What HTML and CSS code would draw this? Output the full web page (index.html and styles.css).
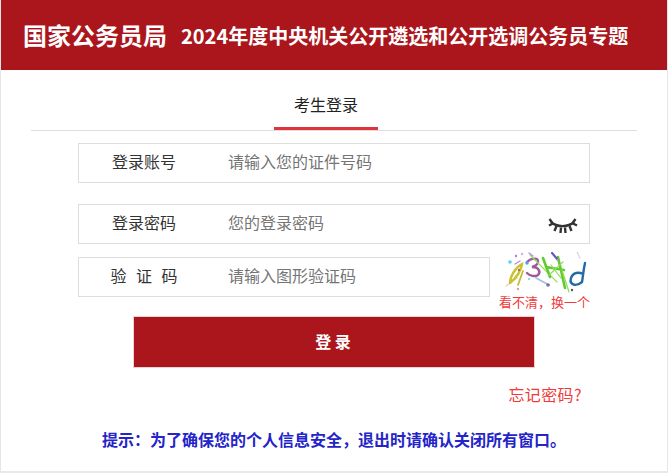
FILE: index.html
```html
<!DOCTYPE html>
<html lang="zh-CN">
<head>
<meta charset="utf-8">
<title>考生登录</title>
<link rel="stylesheet" href="styles.css">
</head>
<body>
<div class="page">
  <header class="banner">
    <span class="org">国家公务员局</span>
    <span class="topic">2024年度中央机关公开遴选和公开选调公务员专题</span>
  </header>
  <nav class="tabs"><span class="tab">考生登录</span></nav>
  <form class="form">
    <div class="field account">
      <span class="label">登录账号</span>
      <span class="hint-text">请输入您的证件号码</span>
    </div>
    <div class="field password">
      <span class="label">登录密码</span>
      <span class="hint-text">您的登录密码</span>
      <svg class="eye" width="30" height="16" viewBox="0 0 30 16" aria-hidden="true">
        <path d="M3 4C9 9.500 20 9.500 26 4" fill="none" stroke="#333" stroke-width="2.400"/>
        <path d="M1 7.500L5 5.500M6.500 13L8.500 8M12.500 15L13 9.500M17.500 15L17 9.500M23.500 13L21.500 8M29 7.500L25 5.500M27.500 1L25 4.500M1.500 1L4 4.500" fill="none" stroke="#333" stroke-width="2.400"/>
      </svg>
    </div>
    <div class="captcha-row">
      <div class="field code">
        <span class="label spaced">验 证 码</span>
        <span class="hint-text">请输入图形验证码</span>
      </div>
      <div class="captcha">
        <svg class="captcha-img" width="85" height="41" viewBox="0 0 85 41" aria-hidden="true">
          <g fill="none" stroke-linecap="round">
            <path d="M1 34L12 26" stroke="#e0cfc0" stroke-width="1.200"/>
            <path d="M5 31C11 26 16 19 17 12C11 15 5 24 5 31" stroke="#cbc22f" stroke-width="2.400"/>
            <path d="M13 33L18 19" stroke="#c4bb3a" stroke-width="1.800"/>
            <path d="M22 10C26 6 34 5 33 10C33 13 30 14 27 15C34 15 36 20 33 23C30 25 25 24 22 21" stroke="#9c5a9c" stroke-width="2.400"/>
            <path d="M25 3L52 30" stroke="#9fdf60" stroke-width="1.200"/>
            <path d="M38 6L45 25M53 5L60 36M41 15L59 18" stroke="#5fcb2c" stroke-width="2.600"/>
            <path d="M44 23L58 10M57 18L64 40M46 13L56 26" stroke="#8fdc5a" stroke-width="1.200"/>
            <path d="M80 11C78 20 78 25 77 30C71 35 64 33 66 26C68 20 74 20 78 22" stroke="#246aa4" stroke-width="2.400"/>
            <path d="M31 26L44 33" stroke="#a8bce8" stroke-width="1.800"/>
            <path d="M47 1L53 8" stroke="#5c5cc4" stroke-width="2.200"/>
            <path d="M72 0L75 6" stroke="#dccdee" stroke-width="1.200"/>
            <path d="M10 12L15 9M24 1L28 4" stroke="#b888d8" stroke-width="1.300"/>
          </g>
          <g>
            <circle cx="5" cy="10" r="1.800" fill="#55d4ec"/>
            <circle cx="11" cy="4" r="1.200" fill="#b878de"/>
            <circle cx="17" cy="2" r="1.200" fill="#d8a8e8"/>
            <circle cx="24" cy="27" r="1.200" fill="#90dede"/>
            <circle cx="13" cy="37" r="1.200" fill="#d8a0a0"/>
            <circle cx="43" cy="33" r="1.800" fill="#74749e"/>
            <circle cx="22" cy="11" r="1.800" fill="#50a8e0"/>
            <circle cx="67" cy="38" r="1.200" fill="#555"/>
            <circle cx="53" cy="8" r="1.200" fill="#c49878"/>
            <circle cx="14" cy="18" r="1.200" fill="#c06060"/>
          </g>
        </svg>
        <a class="refresh">看不清，换一个</a>
      </div>
    </div>
    <button class="submit" type="button">登 录</button>
    <div class="forgot-row"><a class="forgot">忘记密码?</a></div>
    <p class="notice">提示：为了确保您的个人信息安全，退出时请确认关闭所有窗口。</p>
  </form>
</div>
</body>
</html>
```
FILE: styles.css
```css
html, body {
  margin: 0;
  padding: 0;
  background: #fff;
}
body {
  font-family: "Noto Sans CJK SC", "Liberation Sans", sans-serif;
}
.page {
  width: 668px;
  height: 473px;
  box-sizing: border-box;
  border-left: 1px solid #e6e6e6;
  border-right: 1px solid #e6e6e6;
  border-bottom: 2px solid #e9e9e9;
  overflow: hidden;
}
.banner {
  height: 70px;
  background: #aa161c;
  color: #fff;
  display: flex;
  align-items: center;
  padding-left: 22px;
  font-weight: 700;
  white-space: nowrap;
}
.org {
  font-size: 24px;
  line-height: 70px;
}
.topic {
  font-size: 20px;
  line-height: 70px;
  margin-left: 14px;
  padding-top: 1px;
}
.tabs {
  margin: 0 30px;
  height: 61px;
  border-bottom: 1px solid #ddd;
  display: flex;
  justify-content: center;
  box-sizing: border-box;
  padding-right: 16px;
}
.tab {
  width: 104px;
  height: 60px;
  box-sizing: border-box;
  border-bottom: 3px solid #e0343c;
  text-align: center;
  font-size: 16px;
  line-height: 68px;
  color: #222;
}
.form {
  padding: 12px 77px 0;
}
.field {
  display: flex;
  align-items: center;
  height: 40px;
  box-sizing: border-box;
  border: 1px solid #ddd;
  font-size: 16px;
  padding-bottom: 5px;
}
.password {
  margin-top: 21px;
  padding-right: 11px;
}
.label {
  width: 130px;
  margin-right: 19px;
  text-align: center;
  color: #333;
  white-space: pre;
}
.spaced {
  word-spacing: 6px;
}
.hint-text {
  color: #757575;
  flex: 1;
}
.eye {
  flex: none;
  margin-top: 8px;
}
.captcha-row {
  display: flex;
  margin-top: 13px;
  height: 59px;
}
.code {
  width: 412px;
  flex: none;
}
.captcha {
  flex: 1;
  display: flex;
  flex-direction: column;
  align-items: flex-end;
  margin-top: -5px;
}
.captcha-img {
  display: block;
  flex: none;
}
.refresh {
  font-size: 13px;
  line-height: 18px;
  color: #f03a3a;
  white-space: nowrap;
}
.submit {
  display: block;
  width: 402px;
  height: 52px;
  margin: 0 0 0 55px;
  border: 1px solid #f0d0d2;
  background: #aa161c;
  color: #fff;
  font: 700 16px "Noto Sans CJK SC", sans-serif;
  padding: 0 2px 3px 0;
}
.forgot-row {
  display: flex;
  justify-content: flex-end;
  margin-top: 15px;
  padding-right: 8px;
}
.forgot {
  font-size: 16px;
  line-height: 22px;
  letter-spacing: 0.4px;
  color: #f03a3a;
}
.notice {
  margin: 22px 0 0 24px;
  font-size: 16px;
  font-weight: 700;
  line-height: 24px;
  color: #2424c8;
  white-space: nowrap;
}
```
